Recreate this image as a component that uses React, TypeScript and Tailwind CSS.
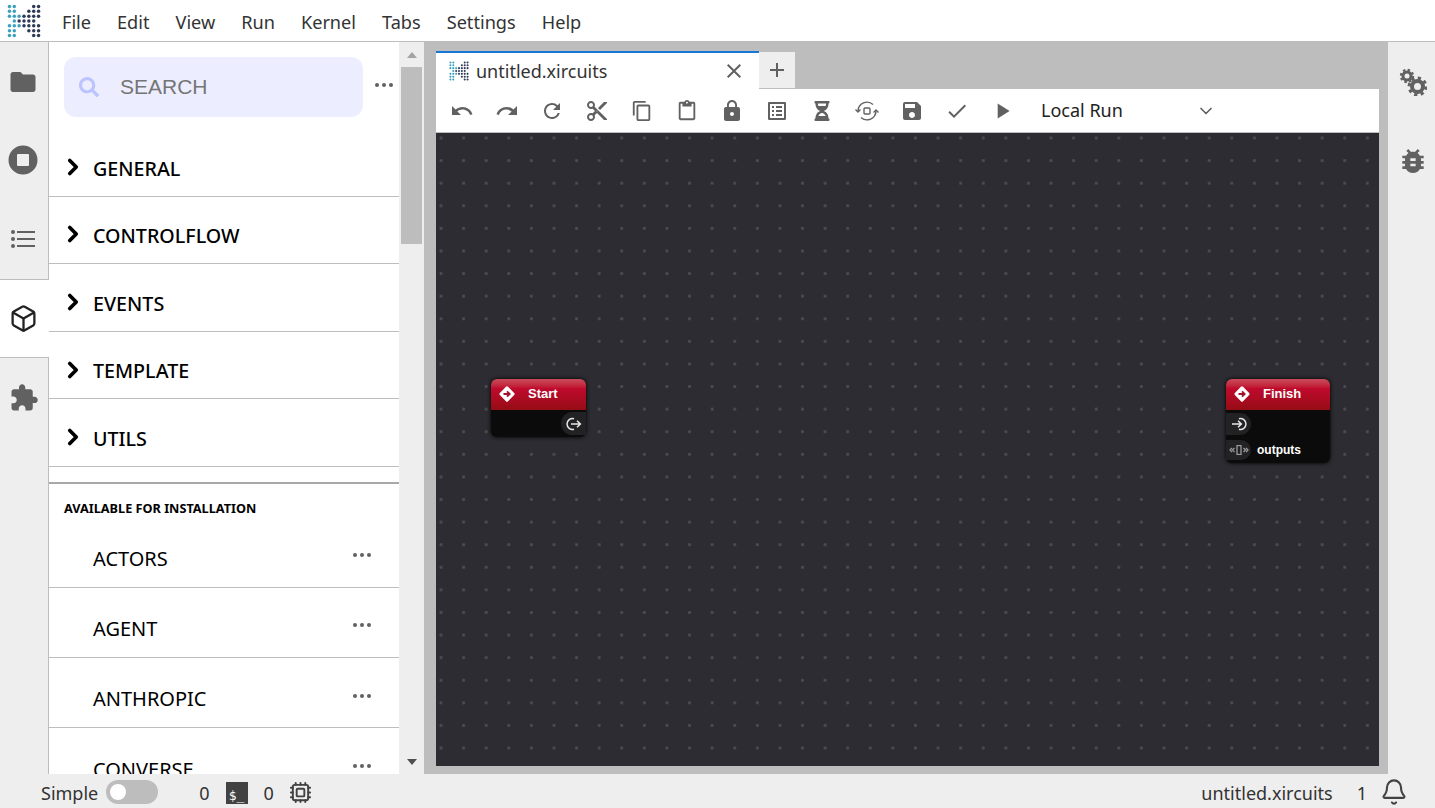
import { Bell, Box, ChevronDown, ChevronRight, Cpu } from "lucide-react";
import { FaHourglassHalf, FaSearch } from "react-icons/fa";
import {
  MdAdd, MdCheck, MdClose, MdContentCopy, MdContentCut, MdContentPaste, MdListAlt,
  MdLock, MdPlayArrow, MdRedo, MdRefresh, MdSave, MdUndo,
} from "react-icons/md";

const menus = ["File", "Edit", "View", "Run", "Kernel", "Tabs", "Settings", "Help"];
const categories = ["GENERAL", "CONTROLFLOW", "EVENTS", "TEMPLATE", "UTILS"];
const installable = ["ACTORS", "AGENT", "ANTHROPIC", "CONVERSE"];

// dot matrix of the logo: 1 = teal, 2 = navy
const logoRows = [
  [1, 1, 0, 0, 0, 2, 2],
  [1, 1, 0, 0, 2, 2, 2],
  [1, 1, 1, 2, 2, 2, 2],
  [0, 1, 2, 2, 2, 2, 0],
  [1, 1, 1, 2, 2, 2, 2],
  [1, 1, 0, 0, 2, 2, 2],
  [1, 1, 0, 0, 0, 2, 2],
];

function Logo({ size }: { size: number }) {
  return (
    <svg width={size} height={size} viewBox="0 0 35 35">
      {logoRows.map((row, y) =>
        row.map((v, x) =>
          v ? <circle key={`${x}-${y}`} cx={2.5 + x * 5} cy={2.5 + y * 5} r={1.8} fill={v === 1 ? "#3d9fbd" : "#2f3a57"} /> : null
        )
      )}
    </svg>
  );
}

function Dots() {
  return (
    <svg width="20" height="6" viewBox="0 0 20 6" className="shrink-0">
      <circle cx="3" cy="3" r="2" fill="#616161" />
      <circle cx="10" cy="3" r="2" fill="#616161" />
      <circle cx="17" cy="3" r="2" fill="#616161" />
    </svg>
  );
}

function FolderIcon() {
  return (
    <svg width="30" height="30" viewBox="0 0 24 24" fill="#616161">
      <path d="M10 4H4c-1.1 0-1.99.9-1.99 2L2 18c0 1.1.9 2 2 2h16c1.1 0 2-.9 2-2V8c0-1.1-.9-2-2-2h-8l-2-2z" />
    </svg>
  );
}

function StopIcon() {
  return (
    <svg width="30" height="30" viewBox="0 0 30 30" fill="#616161">
      <path fillRule="evenodd" d="M15 0.5a14.5 14.5 0 1 0 0 29a14.5 14.5 0 1 0 0-29zM10 9h10a1 1 0 0 1 1 1v10a1 1 0 0 1-1 1H10a1 1 0 0 1-1-1V10a1 1 0 0 1 1-1z" />
    </svg>
  );
}

function ListIcon() {
  return (
    <svg width="26" height="22" viewBox="0 0 26 22" fill="#616161">
      <circle cx="3" cy="4" r="2" />
      <circle cx="3" cy="11" r="2" />
      <circle cx="3" cy="18" r="2" />
      <rect x="7" y="3" width="18" height="2" />
      <rect x="7" y="10" width="18" height="2" />
      <rect x="7" y="17" width="18" height="2" />
    </svg>
  );
}

function ExtensionIcon() {
  return (
    <svg width="30" height="30" viewBox="0 0 24 24" fill="#616161">
      <path d="M20.5 11H19V7c0-1.1-.9-2-2-2h-4V3.5C13 2.12 11.88 1 10.5 1S8 2.12 8 3.5V5H4c-1.1 0-1.99.9-1.99 2v3.8H3.5c1.49 0 2.7 1.21 2.7 2.7s-1.21 2.7-2.7 2.7H2V20c0 1.1.9 2 2 2h3.8v-1.5c0-1.49 1.21-2.7 2.7-2.7 1.49 0 2.7 1.21 2.7 2.7V22H17c1.1 0 2-.9 2-2v-4h1.5c1.38 0 2.5-1.12 2.5-2.5S21.88 11 20.5 11z" />
    </svg>
  );
}

function GearsIcon() {
  return (
    <svg width="28" height="28" viewBox="0 0 28 28" fill="none" stroke="#616161">
      <circle cx="8" cy="8" r="4" strokeWidth="3" />
      <circle cx="8" cy="8" r="6" strokeWidth="2.4" strokeDasharray="2.4 2.3" />
      <circle cx="18.5" cy="18.5" r="5.5" strokeWidth="4" />
      <circle cx="18.5" cy="18.5" r="8.4" strokeWidth="3" strokeDasharray="3.2 3.4" />
    </svg>
  );
}

function BugIcon() {
  return (
    <svg width="32" height="32" viewBox="0 0 24 24" fill="#616161">
      <path d="M20 8h-2.81c-.45-.78-1.07-1.45-1.82-1.96L17 4.41 15.59 3l-2.17 2.17C12.96 5.06 12.49 5 12 5c-.49 0-.96.06-1.41.17L8.41 3 7 4.41l1.62 1.63C7.88 6.55 7.26 7.22 6.81 8H4v2h2.09c-.05.33-.09.66-.09 1v1H4v2h2v1c0 .34.04.67.09 1H4v2h2.81c1.04 1.79 2.97 3 5.19 3s4.15-1.21 5.19-3H20v-2h-2.09c.05-.33.09-.66.09-1v-1h2v-2h-2v-1c0-.34-.04-.67-.09-1H20V8zm-6 8h-4v-2h4v2zm0-4h-4v-2h4v2z" />
    </svg>
  );
}

function CycleIcon() {
  return (
    <svg width="26" height="24" viewBox="0 0 26 24" fill="none" stroke="#616161" strokeWidth="1.4">
      <path d="M4 12a9 9 0 0 1 15-6.5" />
      <path d="M22 12a9 9 0 0 1-15 6.5" />
      <path d="M1.5 10.5L4 13l2.5-2.5" />
      <path d="M19.5 13.5L22 11l2.5 2.5" />
      <rect x="10" y="9" width="6" height="6" rx="1" />
    </svg>
  );
}

function StartDiamond() {
  return (
    <svg width="18" height="18" viewBox="0 0 18 18">
      <rect x="3.2" y="3.2" width="11.6" height="11.6" rx="1.5" fill="#fff" transform="rotate(45 9 9)" />
      <path d="M5.5 9h6M9 6.3L11.7 9 9 11.7" fill="none" stroke="#a5102a" strokeWidth="1.8" />
    </svg>
  );
}

function OutIcon() {
  return (
    <svg width="16" height="16" viewBox="0 0 16 16" fill="none" stroke="#e8e8e8" strokeWidth="1.5">
      <path d="M8 2.7a5.5 5.5 0 1 0 0 10.6" />
      <path d="M5 8h9.5M11 4.7L14.4 8 11 11.3" />
    </svg>
  );
}

function InIcon() {
  return (
    <svg width="16" height="16" viewBox="0 0 16 16" fill="none" stroke="#e8e8e8" strokeWidth="1.5">
      <path d="M8 2.7a5.5 5.5 0 1 1 0 10.6" />
      <path d="M1 8h9.5M7 4.7L10.4 8 7 11.3" />
    </svg>
  );
}

function ArrayIcon() {
  return (
    <svg width="20" height="10" viewBox="0 0 20 10" fill="none" stroke="#9a9a9a" strokeWidth="1.3">
      <path d="M3 3L1 5l2 2M5.5 3l-2 2 2 2" />
      <path d="M17 3l2 2-2 2M14.5 3l2 2-2 2" />
      <rect x="8" y="0.5" width="4" height="9" />
    </svg>
  );
}

function NodeHeader({ title }: { title: string }) {
  return (
    <div className="h-[31px] flex items-center gap-[12px] pl-[7px] pb-[2px] rounded-t-[6px] bg-gradient-to-b from-[#c84a5c] via-[#c00a2e] via-30% to-[#960c14] text-white font-bold text-[13px]">
      <StartDiamond />
      <span>{title}</span>
    </div>
  );
}

export default function App() {
  const tools = [
    <MdUndo size={24} />,
    <MdRedo size={24} />,
    <MdRefresh size={24} />,
    <MdContentCut size={24} />,
    <MdContentCopy size={22} />,
    <MdContentPaste size={22} />,
    <MdLock size={24} />,
    <MdListAlt size={24} />,
    <FaHourglassHalf size={20} />,
    <CycleIcon />,
    <MdSave size={24} />,
    <MdCheck size={24} />,
    <MdPlayArrow size={26} />,
  ];

  return (
    <div className="h-screen w-full overflow-hidden flex flex-col bg-[#eeeeee] text-[#333] text-[18px] font-['Noto_Sans',sans-serif]">
      {/* menu bar */}
      <div className="h-[42px] shrink-0 flex items-center bg-white border-b border-[#bdbdbd] text-[18.15px]">
        <div className="w-[49px] pl-[7px] flex items-center">
          <Logo size={34} />
        </div>
        {menus.map(m => (
          <span key={m} className="px-[13px] pt-[4px]">{m}</span>
        ))}
      </div>

      <div className="flex-1 min-h-0 flex">
        {/* left rail */}
        <div className="w-[49px] shrink-0 flex flex-col border-r border-[#bdbdbd]">
          <div className="h-[79px] flex items-center justify-center pr-[2px]"><FolderIcon /></div>
          <div className="h-[79px] flex items-center justify-center pr-[2px] pb-[1px]"><StopIcon /></div>
          <div className="h-[79px] flex items-center justify-center pr-[2px] pb-[1px]"><ListIcon /></div>
          <div className="h-[79px] w-[49px] bg-white border-y border-[#bdbdbd] flex items-center justify-center pr-[2px] pb-[1px] text-[#222]">
            <Box size={29} strokeWidth={1.9} />
          </div>
          <div className="h-[79px] flex items-center justify-center pr-[1px]"><ExtensionIcon /></div>
        </div>

        {/* sidebar */}
        <div className="w-[350px] shrink-0 bg-white overflow-hidden text-black">
          <div className="h-[87px] flex items-start pt-[15px] pl-[15px]">
            <div className="w-[299px] h-[60px] rounded-[12px] bg-[#eceeff] flex items-center pl-[15px] gap-[21px]">
              <FaSearch size={20} className="text-[#bcc4ff]" />
              <span className="font-['Liberation_Sans',sans-serif] text-[21px] text-[#757575] pb-[1px]">SEARCH</span>
            </div>
            <div className="ml-[11px] mt-[25px]"><Dots /></div>
          </div>
          {categories.map(c => (
            <div key={c} className="h-[67.6px] border-b border-[#bdbdbd] flex items-center pt-[11px] pl-[11px] text-[19.7px] font-medium">
              <ChevronRight size={26} strokeWidth={3.4} className="-mt-[2px]" />
              <span className="ml-[7px] pt-[1px]">{c}</span>
            </div>
          ))}
          <div className="h-[17px] border-b-2 border-[#a8a8a8]" />
          <div className="h-[33.5px] flex items-end pb-[1px] pl-[15px] text-[12.7px] font-bold leading-[16px]">AVAILABLE FOR INSTALLATION</div>
          {installable.map(name => (
            <div key={name} className="h-[70.3px] border-b border-[#bdbdbd] flex items-center justify-between pt-[12px] pl-[44px] pr-[27px] text-[20px]">
              <span className="pt-[1px]">{name}</span>
              <div className="-mt-[6px]"><Dots /></div>
            </div>
          ))}
        </div>

        {/* sidebar scrollbar */}
        <div className="w-[25px] shrink-0 flex flex-col items-center">
          <div className="h-[25px] flex items-center justify-center">
            <div className="w-0 h-0 border-x-[5.5px] border-x-transparent border-b-[6px] border-b-[#a3a3a3]" />
          </div>
          <div className="w-[21px] h-[177px] bg-[#bdbdbd]" />
          <div className="flex-1" />
          <div className="h-[25px] flex items-center justify-center">
            <div className="w-0 h-0 border-x-[5.5px] border-x-transparent border-t-[6px] border-t-[#505050]" />
          </div>
        </div>

        {/* main area */}
        <div className="flex-1 min-w-0 bg-[#bdbdbd] pl-[12px] pr-[9px] pt-[9px] pb-[8px] flex flex-col">
          <div className="h-[38px] shrink-0 flex items-end">
            <div className="w-[323px] h-[38px] bg-white border-t-2 border-[#1976d2] flex items-center pl-[13px] pr-[13px]">
              <Logo size={20} />
              <span className="ml-[7px] flex-1">untitled.xircuits</span>
              <MdClose size={24} className="text-[#616161]" />
            </div>
            <div className="w-[37px] h-[37px] bg-[#eeeeee] border-b border-r border-[#bdbdbd] flex items-center justify-center text-[#616161]">
              <MdAdd size={24} />
            </div>
          </div>
          <div className="h-[44px] shrink-0 bg-white border-b border-[#bdbdbd] flex items-center pl-[3px] text-[#616161]">
            {tools.map((t, i) => (
              <div key={i} className="w-[45px] flex items-center justify-center">{t}</div>
            ))}
            <div className="w-[175px] ml-[17px] flex items-center justify-between text-[#222]">
              <span>Local Run</span>
              <ChevronDown size={20} className="text-[#616161]" />
            </div>
          </div>

          {/* canvas */}
          <div className="relative flex-1 min-h-0 bg-[#2c2c32] bg-[radial-gradient(circle,#4b4b50_1.3px,transparent_1.7px)] bg-[size:22.6px_22.6px] bg-[position:-6.3px_-6.3px] font-['Liberation_Sans',sans-serif]">
            <div className="absolute left-[55px] top-[246px] w-[95px] rounded-[6px] bg-[#0b0b0b] shadow-[0_0_4px_#000] text-white">
              <NodeHeader title="Start" />
              <div className="h-[27px] flex items-center justify-end">
                <div className="w-[25px] h-[23px] rounded-l-full bg-[#222225] flex items-center justify-center">
                  <OutIcon />
                </div>
              </div>
            </div>

            <div className="absolute left-[790px] top-[246px] w-[104px] rounded-[6px] bg-[#0b0b0b] shadow-[0_0_4px_#000] text-white">
              <NodeHeader title="Finish" />
              <div className="h-[27px] flex items-center">
                <div className="w-[25px] h-[22px] rounded-r-full bg-[#222225] flex items-center justify-center">
                  <InIcon />
                </div>
              </div>
              <div className="h-[26px] flex items-center gap-[6px]">
                <div className="w-[25px] h-[20px] rounded-r-full bg-[#222225] flex items-center justify-center">
                  <ArrayIcon />
                </div>
                <span className="text-[12px] font-bold">outputs</span>
              </div>
            </div>
          </div>
        </div>

        {/* right rail */}
        <div className="w-[47px] shrink-0 flex flex-col items-center pl-[3px] text-[#616161]">
          <div className="h-[79px] flex items-center justify-center"><GearsIcon /></div>
          <div className="h-[79px] flex items-center justify-center"><BugIcon /></div>
        </div>
      </div>

      {/* status bar */}
      <div className="h-[34px] shrink-0 flex items-center bg-[#eeeeee] pt-[2px] pl-[41px] pr-[27px]">
        <span className="pt-[2px]">Simple</span>
        <div className="ml-[8px] w-[52px] h-[24px] rounded-full bg-[#bdbdbd] flex items-center pl-[4px]">
          <div className="w-[16px] h-[16px] rounded-full bg-white" />
        </div>
        <span className="ml-[41px] pt-[2px]">0</span>
        <div className="ml-[16px] mt-[2px] w-[22px] h-[22px] bg-[#424242] flex items-end justify-center pb-[2px] text-white text-[13px] font-['DejaVu_Sans_Mono',monospace] leading-none">
          $_
        </div>
        <span className="ml-[16px] pt-[2px]">0</span>
        <Cpu size={23} strokeWidth={2} className="ml-[15px] text-[#424242]" />
        <div className="flex-1" />
        <span className="pt-[2px]">untitled.xircuits</span>
        <span className="ml-[24px] pt-[2px]">1</span>
        <Bell size={28} strokeWidth={1.8} className="ml-[13px] text-[#424242]" />
      </div>
    </div>
  );
}
